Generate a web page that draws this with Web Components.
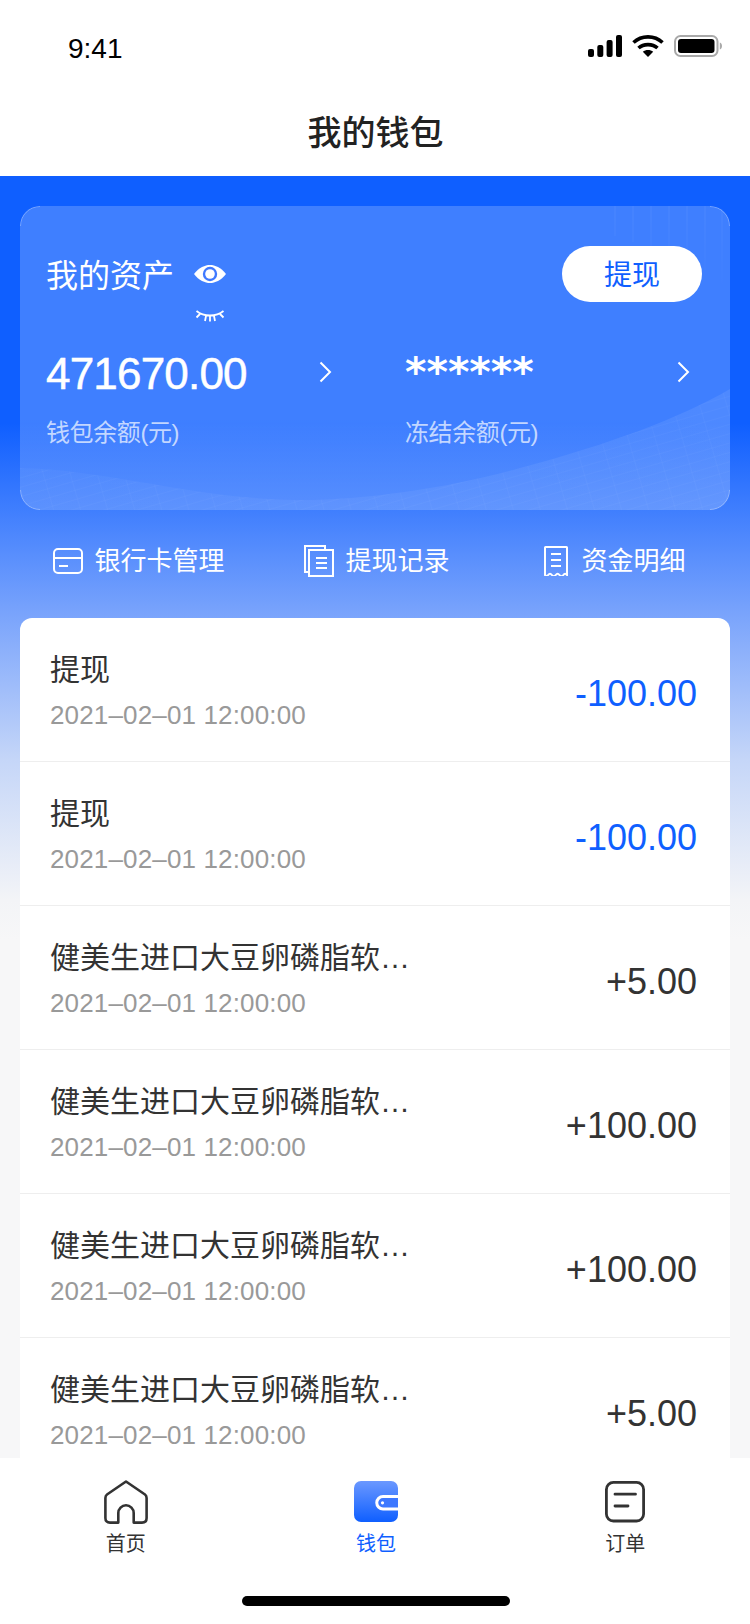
<!DOCTYPE html>
<html lang="zh">
<head>
<meta charset="utf-8">
<title>我的钱包</title>
<style>
    html, body { margin: 0; padding: 0; background: #f7f7f8; }
    body { font-family: "Liberation Sans", "Noto Sans CJK SC", sans-serif; }
</style>
</head>
<body>

<wallet-app>
    <status-bar slot="top"></status-bar>
    <nav-header slot="top">我的钱包</nav-header>

    <balance-card>
        <balance-cell amount="471670.00" label="钱包余额(元)"></balance-cell>
        <balance-cell amount="******" label="冻结余额(元)" masked></balance-cell>
    </balance-card>

    <quick-links>
        <quick-link icon="card">银行卡管理</quick-link>
        <quick-link icon="docs">提现记录</quick-link>
        <quick-link icon="receipt">资金明细</quick-link>
    </quick-links>

    <record-list>
        <record-row name="提现" time="2021–02–01 12:00:00" amount="-100.00" out></record-row>
        <record-row name="提现" time="2021–02–01 12:00:00" amount="-100.00" out></record-row>
        <record-row name="健美生进口大豆卵磷脂软…" time="2021–02–01 12:00:00" amount="+5.00"></record-row>
        <record-row name="健美生进口大豆卵磷脂软…" time="2021–02–01 12:00:00" amount="+100.00"></record-row>
        <record-row name="健美生进口大豆卵磷脂软…" time="2021–02–01 12:00:00" amount="+100.00"></record-row>
        <record-row name="健美生进口大豆卵磷脂软…" time="2021–02–01 12:00:00" amount="+5.00"></record-row>
    </record-list>

    <tab-bar slot="bottom">
        <tab-item icon="home">首页</tab-item>
        <tab-item icon="wallet" active>钱包</tab-item>
        <tab-item icon="order">订单</tab-item>
    </tab-bar>
</wallet-app>

<script>
// ----------------------------------------------------
// Wallet page. Every block is a custom element with its
// own shadow root, the page only composes them.
// ----------------------------------------------------
const BLUE = '#0f5fff';

const ICONS = {
    card: `<svg width="30" height="26" viewBox="0 0 30 26" fill="none" stroke="#fff" stroke-width="2">
        <rect x="1" y="1" width="28" height="24" rx="4"/>
        <path d="M1 10h28M6 18h9"/>
    </svg>`,
    docs: `<svg width="30" height="32" viewBox="0 0 30 32" fill="none" stroke="#fff" stroke-width="2">
        <path d="M5 27H1V1h20v4"/>
        <rect x="5" y="5" width="24" height="26"/>
        <path d="M12 13h11M12 18h11M12 23h11"/>
    </svg>`,
    receipt: `<svg width="26" height="30" viewBox="0 0 26 30" fill="none" stroke="#fff" stroke-width="2">
        <path d="M1 29V1.500Q1 1 1.500 1h21q.5 0 .5.5V29q-2-2.400-3.700 0q-1.900 2.400-3.800 0q-1.900-2.400-3.800 0q-1.900 2.400-3.800 0q-1.900-2.400-3.800 0Q2.800 31 1 29Z"/>
        <path d="M7 8h10M7 14h10M7 20h10"/>
    </svg>`,
    home: `<svg width="44" height="44" viewBox="0 0 44 44" fill="none" stroke="#333" stroke-width="2.600" stroke-linejoin="round">
        <path d="M22 1.500L41 14.500Q42.600 15.700 42.600 18V38Q42.600 42.600 38 42.600H29.700V33A7.700 7.700 0 0 0 14.300 33V42.600H6Q1.400 42.600 1.400 38V18Q1.400 15.700 3 14.500Z"/>
    </svg>`,
    wallet: `<svg width="44" height="42" viewBox="0 0 44 42" fill="none">
        <defs><linearGradient id="w" x1="0" y1="0" x2="0" y2="1"><stop offset="0" stop-color="#6b98ff"/><stop offset="1" stop-color="#0f5fff"/></linearGradient></defs>
        <rect width="44" height="41" rx="7" fill="url(#w)"/>
        <path d="M44 15.500H29A6 6 0 0 0 29 28H44" fill="#3d78ff" stroke="#fff" stroke-width="3"/>
        <circle cx="28.500" cy="21.800" r="1.600" fill="#fff"/>
    </svg>`,
    order: `<svg width="40" height="42" viewBox="0 0 40 42" fill="none" stroke="#333" stroke-width="2.800" stroke-linecap="round">
        <rect x="1.400" y="1.400" width="37.200" height="38.600" rx="7"/>
        <path d="M10 13.200H30.500M10 25H23"/>
    </svg>`
};

class StatusBar extends HTMLElement {
    connectedCallback() {
        this.attachShadow({ mode: 'open' }).innerHTML = `
            <style>
                :host { display: flex; align-items: center; justify-content: space-between; height: 88px; padding: 4px 28px 0 68px; box-sizing: border-box; background: #fff; }
                .time { font-size: 28px; color: #000; line-height: 88px; margin-top: 6px; }
                .icons { display: flex; align-items: center; gap: 10px; }
                svg { display: block; }
            </style>
            <span class="time">9:41</span>
            <div class="icons">
                <svg width="34" height="22" viewBox="0 0 34 22" fill="#000">
                    <rect x="0" y="14" width="6" height="8" rx="2"/>
                    <rect x="9.300" y="10" width="6" height="12" rx="2"/>
                    <rect x="18.600" y="5" width="6" height="17" rx="2"/>
                    <rect x="28" y="0" width="6" height="22" rx="2"/>
                </svg>
                <svg width="32" height="22" viewBox="0 0 32 22" fill="none" stroke="#000" stroke-width="3.600">
                    <path d="M1.500 7.500C9.500 0 22.500 0 30.500 7.500"/>
                    <path d="M6.500 13C11.500 8.500 20.500 8.500 25.500 13"/>
                    <path d="M16 22L10.800 16.800C13.500 14.300 18.500 14.300 21.200 16.800Z" fill="#000" stroke="none"/>
                </svg>
                <svg width="48" height="22" viewBox="0 0 48 22" fill="none">
                    <rect x="1" y="1" width="42.500" height="20" rx="5.500" stroke="#a9a9a9" stroke-width="2"/>
                    <rect x="4" y="4" width="36.500" height="14" rx="3" fill="#000"/>
                    <path d="M45.800 7.500V14.500C47.200 14 48 12.700 48 11S47.200 8 45.800 7.500Z" fill="#a9a9a9"/>
                </svg>
            </div>`;
    }
}

class NavHeader extends HTMLElement {
    connectedCallback() {
        this.attachShadow({ mode: 'open' }).innerHTML = `
            <style>
                :host { display: flex; align-items: center; justify-content: center; height: 88px; box-sizing: border-box; padding: 0 0 4px 1px; background: #fff; color: #222; font-size: 34px; font-weight: 500; }
            </style>
            <slot></slot>`;
    }
}

class BalanceCard extends HTMLElement {
    connectedCallback() {
        this.attachShadow({ mode: 'open' }).innerHTML = `
            <style>
                :host { display: block; position: relative; height: 304px; box-sizing: border-box; padding: 40px 28px 0 26px; border-radius: 20px; background: linear-gradient(180deg, rgba(255,255,255,.2) 70%, rgba(255,255,255,.13) 100%); overflow: hidden; color: #fff; }
                .deco { position: absolute; left: 0; top: 0; }
                .top { position: relative; display: flex; align-items: flex-start; }
                h2 { margin: 0; padding-top: 2px; font-size: 32px; font-weight: 400; line-height: 56px; }
                .eyes { display: flex; flex-direction: column; align-items: center; gap: 27px; margin: 19px 0 0 20px; }
                .eyes svg { display: block; }
                button { margin-left: auto; width: 140px; height: 56px; padding: 0 0 2px; border: 0; border-radius: 28px; background: #fff; color: ${BLUE}; font: inherit; font-size: 28px; }
                .cells { position: relative; display: grid; grid-template-columns: 286px 285px; column-gap: 73px; margin-top: 20px; }
            </style>
            <svg class="deco" width="710" height="304" viewBox="0 0 710 304" fill="none">
                <defs>
                    <pattern id="hatch" width="26" height="9" patternUnits="userSpaceOnUse" patternTransform="rotate(-16)">
                        <path d="M0 0H26M0 0V9" stroke="#fff" stroke-opacity=".05"/>
                    </pattern>
                    <linearGradient id="fade" x1="0" y1="0" x2="0" y2="1">
                        <stop offset="0" stop-color="#fff" stop-opacity=".07"/>
                        <stop offset="1" stop-color="#fff" stop-opacity="0"/>
                    </linearGradient>
                    <linearGradient id="band" x1="0" y1="0" x2="1" y2="0">
                        <stop offset="0" stop-color="#fff" stop-opacity=".025"/>
                        <stop offset=".5" stop-color="#fff" stop-opacity=".05"/>
                        <stop offset="1" stop-color="#fff" stop-opacity=".08"/>
                    </linearGradient>
                </defs>
                <path d="M0 262C90 264 170 292 275 294C340 295 430 282 500 262C590 238 660 212 710 183V304H0Z" fill="url(#band)"/>
                <path d="M0 262C90 264 170 292 275 294C340 295 430 282 500 262C590 238 660 212 710 183V304H0Z" fill="url(#hatch)"/>
                <path d="M595 0V30M613 0V36M631 0V44M649 0V50M667 0V56M685 0V64M702 0V84" stroke="url(#fade)"/>
                <path d="M.5 20A19.500 19.500 0 0 1 20 .5M690 303.500A19.500 19.500 0 0 0 709.500 284M.5 284A19.500 19.500 0 0 0 20 303.500M690 .5A19.500 19.500 0 0 1 709.500 20" stroke="#fff" stroke-opacity=".3"/>
            </svg>
            <div class="top">
                <h2>我的资产</h2>
                <div class="eyes">
                    <svg width="32" height="18" viewBox="0 0 32 18">
                        <path d="M0 9C5 2.500 11 0 16 0S27 2.500 32 9C27 15.500 21 18 16 18S5 15.500 0 9Z" fill="#fff"/>
                        <circle cx="16" cy="9" r="7.200" fill="#3f79ff"/>
                        <circle cx="16" cy="9" r="4.800" fill="#fff"/>
                    </svg>
                    <svg width="30" height="12" viewBox="0 0 30 12" fill="none" stroke="#fff" stroke-width="1.800">
                        <path d="M1.500 1C9 7 21 7 28.500 1M5 4L1.500 7.500M25 4L28.500 7.500M11 6L10 11M19 6L20 11M15 6.500V11.500"/>
                    </svg>
                </div>
                <button>提现</button>
            </div>
            <div class="cells"><slot></slot></div>`;
    }
}

class BalanceCell extends HTMLElement {
    connectedCallback() {
        const amount = this.getAttribute('amount');
        const label = this.getAttribute('label');
        this.attachShadow({ mode: 'open' }).innerHTML = `
            <style>
                :host { display: block; }
                .line { display: flex; align-items: center; justify-content: space-between; height: 60px; }
                .amount { font-size: 44px; letter-spacing: -.8px; -webkit-text-stroke: .5px #fff; line-height: 60px; padding-top: 3px; }
                :host([masked]) .amount { font-family: "DejaVu Sans", sans-serif; font-size: 41px; font-weight: 700; letter-spacing: 0; -webkit-text-stroke: 0; padding-top: 0; margin-top: 0; }
                svg { display: block; }
                .label { margin-top: 14px; font-size: 24px; letter-spacing: -.4px; line-height: 34px; color: rgba(255,255,255,.7); }
            </style>
            <div class="line">
                <span class="amount">${amount}</span>
                <svg width="13" height="22" viewBox="0 0 13 22" fill="none" stroke="#fff" stroke-width="2"><path d="M1.500 1.500L11 11L1.500 20.500"/></svg>
            </div>
            <div class="label">${label}</div>`;
    }
}

class QuickLinks extends HTMLElement {
    connectedCallback() {
        this.attachShadow({ mode: 'open' }).innerHTML = `
            <style>
                :host { display: grid; grid-template-columns: repeat(3, 1fr); height: 108px; margin-right: -4px; padding: 0 0 6px 0; box-sizing: border-box; align-items: center; }
            </style>
            <slot></slot>`;
    }
}

class QuickLink extends HTMLElement {
    connectedCallback() {
        this.attachShadow({ mode: 'open' }).innerHTML = `
            <style>
                :host { display: flex; align-items: center; justify-content: center; gap: 11px; color: #fff; font-size: 26px; line-height: 36px; }
                svg { display: block; }
            </style>
            ${ICONS[this.getAttribute('icon')]}
            <slot></slot>`;
    }
}

class RecordList extends HTMLElement {
    connectedCallback() {
        this.attachShadow({ mode: 'open' }).innerHTML = `
            <style>
                :host { display: block; background: #fff; border-radius: 12px 12px 0 0; }
            </style>
            <slot></slot>`;
    }
}

class RecordRow extends HTMLElement {
    connectedCallback() {
        const name = this.getAttribute('name');
        const time = this.getAttribute('time');
        const amount = this.getAttribute('amount');
        this.attachShadow({ mode: 'open' }).innerHTML = `
            <style>
                :host { display: flex; align-items: center; justify-content: space-between; height: 144px; box-sizing: border-box; padding: 4px 33px 0 30px; border-bottom: 1px solid #eeeeee; }
                .name { font-size: 30px; line-height: 40px; color: #333; white-space: nowrap; }
                .time { margin-top: 7px; font-size: 26px; letter-spacing: .15px; line-height: 36px; color: #999; }
                .amount { font-size: 36px; color: #333; margin-top: 4px; }
                :host([out]) .amount { color: ${BLUE}; }
            </style>
            <div class="text">
                <div class="name">${name}</div>
                <div class="time">${time}</div>
            </div>
            <div class="amount">${amount}</div>`;
    }
}

class TabBar extends HTMLElement {
    connectedCallback() {
        this.attachShadow({ mode: 'open' }).innerHTML = `
            <style>
                :host { display: block; height: 166px; box-sizing: border-box; padding: 22px 0 0 2px; background: #fff; }
                .items { display: grid; grid-template-columns: repeat(3, 1fr); }
                .home-bar { width: 268px; height: 10px; margin: 38px auto 0; border-radius: 5px; background: #000; }
            </style>
            <div class="items"><slot></slot></div>
            <div class="home-bar"></div>`;
    }
}

class TabItem extends HTMLElement {
    connectedCallback() {
        this.attachShadow({ mode: 'open' }).innerHTML = `
            <style>
                :host { display: flex; flex-direction: column; align-items: center; color: #333; font-size: 20px; line-height: 28px; }
                :host([active]) { color: ${BLUE}; }
                :host([icon="home"]) { padding-right: 2px; }
                .icon { height: 44px; margin-bottom: 6px; display: flex; align-items: center; }
                svg { display: block; }
            </style>
            <div class="icon">${ICONS[this.getAttribute('icon')]}</div>
            <slot></slot>`;
    }
}

class WalletApp extends HTMLElement {
    connectedCallback() {
        this.attachShadow({ mode: 'open' }).innerHTML = `
            <style>
                :host { display: flex; flex-direction: column; width: 750px; height: 1624px; overflow: hidden; background: #f7f7f8; }
                main { flex: 1; min-height: 0; overflow: hidden; padding: 30px 20px 0; background: linear-gradient(180deg, ${BLUE} 0, ${BLUE} 247px, #7aa4fc 439px, #c5d6f8 584px, #f3f4f7 724px, #f7f7f8 764px); }
            </style>
            <slot name="top"></slot>
            <main><slot></slot></main>
            <slot name="bottom"></slot>`;
    }
}

customElements.define('status-bar', StatusBar);
customElements.define('nav-header', NavHeader);
customElements.define('balance-card', BalanceCard);
customElements.define('balance-cell', BalanceCell);
customElements.define('quick-links', QuickLinks);
customElements.define('quick-link', QuickLink);
customElements.define('record-list', RecordList);
customElements.define('record-row', RecordRow);
customElements.define('tab-bar', TabBar);
customElements.define('tab-item', TabItem);
customElements.define('wallet-app', WalletApp);
</script>
</body>
</html>
